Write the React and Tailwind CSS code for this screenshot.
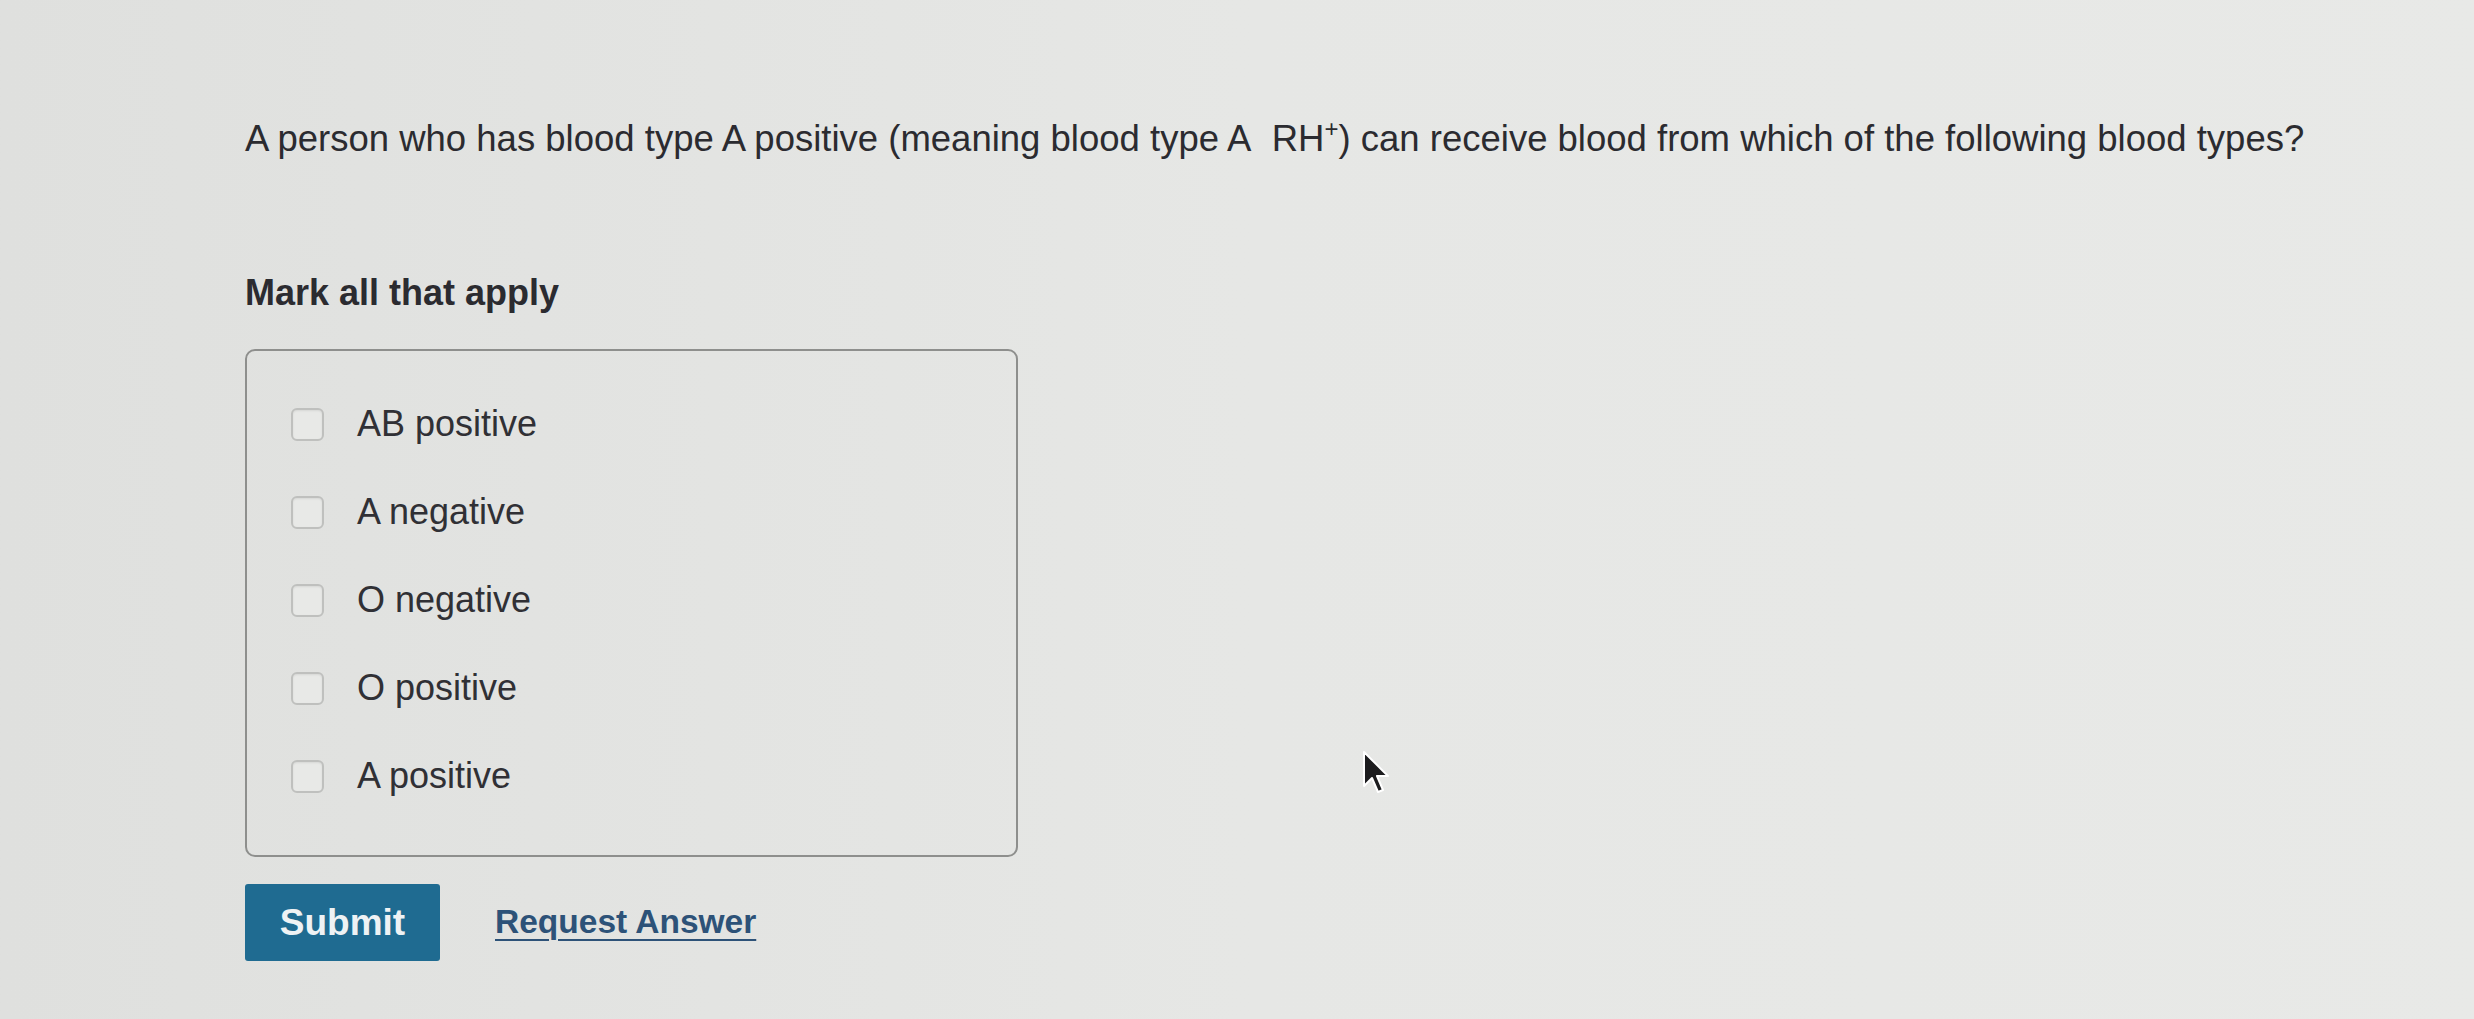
import { useState } from 'react';

const OPTIONS = ['AB positive', 'A negative', 'O negative', 'O positive', 'A positive'];

function Checkbox({ checked, onChange }) {
  return (
    <button
      type="button"
      onClick={onChange}
      className={`w-[33px] h-[33px] shrink-0 rounded-[6px] border-2 border-[#bfc0be] shadow-[inset_0_1px_2px_rgba(0,0,0,0.08)] ${
        checked ? 'bg-[#1f6b91]' : 'bg-[#e8e9e7]'
      }`}
    />
  );
}

export default function App() {
  const [selected, setSelected] = useState([]);

  const toggle = (opt) =>
    setSelected((s) => (s.includes(opt) ? s.filter((o) => o !== opt) : [...s, opt]));

  return (
    <div className="relative min-h-screen w-full bg-linear-to-r from-[#dfe0de] via-[#e6e7e5] to-[#e8e9e7] font-['Liberation_Sans',Arial,sans-serif] text-[#2b2b30]">
      <div className="pl-[245px] pt-[118px]">
        <p className="text-[36.5px] leading-[42px] whitespace-nowrap">
          A person who has blood type A positive (meaning blood type A&nbsp;&nbsp;RH
          <sup className="text-[24px] -top-[14px]">+</sup>) can receive blood from which of the following blood types?
        </p>

        <p className="mt-[112px] text-[36px] leading-[42px] font-bold">Mark all that apply</p>

        <div className="mt-[35px] w-[773px] h-[508px] rounded-[10px] border-2 border-[#8e8f8d] pl-[44px] pt-[52px] flex flex-col gap-[46px]">
          {OPTIONS.map((opt) => (
            <label key={opt} className="flex items-center gap-[33px] cursor-pointer">
              <Checkbox checked={selected.includes(opt)} onChange={() => toggle(opt)} />
              <span className="text-[36px] leading-[42px] text-[#303035]">{opt}</span>
            </label>
          ))}
        </div>

        <div className="mt-[27px] flex items-center gap-[55px]">
          <button className="w-[195px] h-[77px] rounded-[3px] bg-[#1f6b91] text-[#eef2f4] text-[37px] font-bold">
            Submit
          </button>
          <a href="#" className="text-[33.5px] font-bold text-[#2d5278] underline underline-offset-[6px] decoration-2">
            Request Answer
          </a>
        </div>
      </div>

      {/* mouse pointer */}
      <svg className="absolute left-[1362px] top-[750px]" width="30" height="48" viewBox="0 0 30 48">
        <path
          d="M2 2 L2 36 L10 28 L16 42 L21 40 L15 26 L26 26 Z"
          fill="#1c1c1e"
          stroke="#ffffff"
          strokeWidth="2"
          strokeLinejoin="round"
        />
      </svg>
    </div>
  );
}
